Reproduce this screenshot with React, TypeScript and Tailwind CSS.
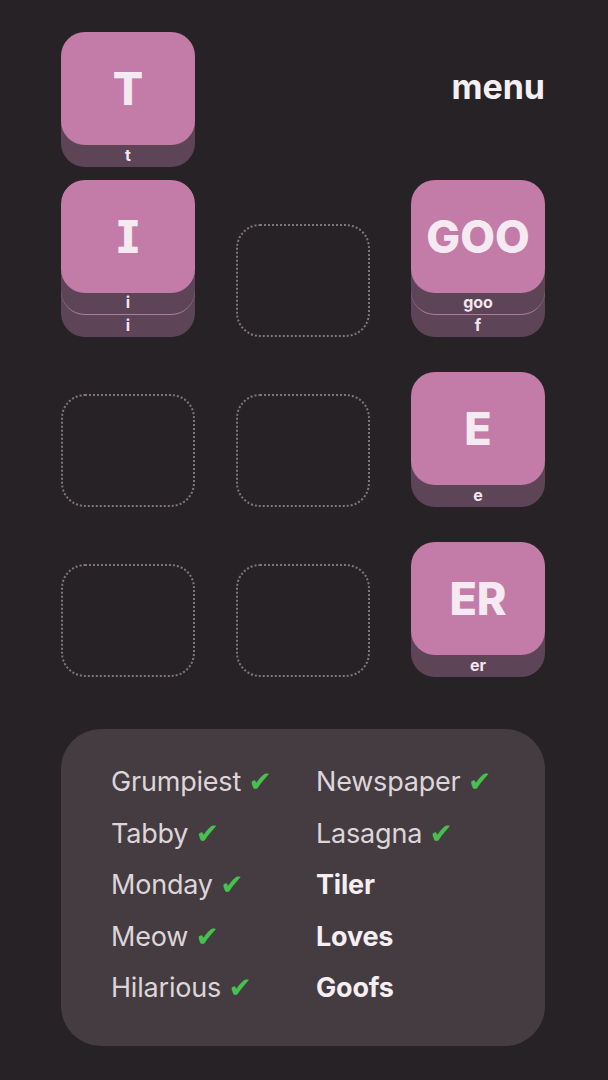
import React from "react";

type Stack = { face: string; layers: string[] } | null;

const OFFSETS = ["top-0", "top-[-22px]", "top-[-44px]", "top-[-66px]"];

function Tile({ face, layers }: { face: string; layers: string[] }) {
  // layers listed from top (just under face) to bottom
  const n = layers.length;
  const bottomFirst = [...layers].reverse();
  return (
    <div className="relative h-[113px] w-[134px]">
      {bottomFirst.map((lbl, k) => (
        <div
          key={k}
          className={`absolute inset-x-0 ${OFFSETS[k]} flex h-[113px] flex-col justify-end rounded-[24px] bg-[#5e4457] ${
            k > 0 ? "border-b-[1.5px] border-[#b07ba2]" : ""
          }`}
        >
          <div className="h-[22px] text-center text-[16px] font-bold leading-[21px] text-[#f3e6ee]">
            {lbl}
          </div>
        </div>
      ))}
      <div
        className={`absolute inset-x-0 ${OFFSETS[n]} flex h-[113px] items-center justify-center rounded-[24px] bg-[#c37ba7] text-[45px] font-extrabold text-[#f5eaf1] [font-feature-settings:'cv08']`}
      >
        {face}
      </div>
    </div>
  );
}

function Empty() {
  return (
    <div className="h-[113px] w-[134px] rounded-[24px] border-2 border-dotted border-[#7d767b]" />
  );
}

const grid: (Stack | "menu")[] = [
  { face: "T", layers: ["t"] },
  null,
  "menu",
  { face: "I", layers: ["i", "i"] },
  null,
  { face: "GOO", layers: ["goo", "f"] },
  null,
  null,
  { face: "E", layers: ["e"] },
  null,
  null,
  { face: "ER", layers: ["er"] },
];

const words: [string, boolean][] = [
  ["Grumpiest", true],
  ["Newspaper", true],
  ["Tabby", true],
  ["Lasagna", true],
  ["Monday", true],
  ["Tiler", false],
  ["Meow", true],
  ["Loves", false],
  ["Hilarious", true],
  ["Goofs", false],
];

export default function App() {
  return (
    <div
      className="min-h-[1080px] w-[608px] bg-[#272226] pl-[61px] pr-[63px] pt-[54px]"
      style={{ fontFamily: "Inter, 'Noto Sans', sans-serif" }}
    >
      <div className="grid grid-cols-[134px_134px_134px] gap-x-[41px] gap-y-[57px]">
        {grid.map((cell, i) => {
          if (cell === "menu") {
            return (
              <div key={i} className="flex h-[113px] items-start justify-end">
                <span className="mt-[13px] text-[34px] font-bold leading-[40px] text-[#f5eef2]">
                  menu
                </span>
              </div>
            );
          }
          if (cell === null) {
            if (i === 1) return <div key={i} />;
            return <Empty key={i} />;
          }
          return <Tile key={i} face={cell.face} layers={cell.layers} />;
        })}
      </div>
      <div className="mt-[52px] h-[317px] w-[484px] rounded-[40px] bg-[#443c41] pl-[50px] pt-[27px]">
        <div className="grid grid-cols-[205px_1fr]">
          {words.map(([w, done], i) => (
            <div key={i} className="h-[51.5px] text-[27px] leading-[51.5px] tracking-[-0.2px]">
              {done ? (
                <span className="font-normal text-[#ddd5da]">
                  {w}{" "}
                  <span
                    className="text-[28px] text-[#46c150]"
                    style={{ fontFamily: "'DejaVu Sans', sans-serif" }}
                  >
                    ✔
                  </span>
                </span>
              ) : (
                <span className="font-bold text-[#f5eef2]">{w}</span>
              )}
            </div>
          ))}
        </div>
      </div>
    </div>
  );
}
